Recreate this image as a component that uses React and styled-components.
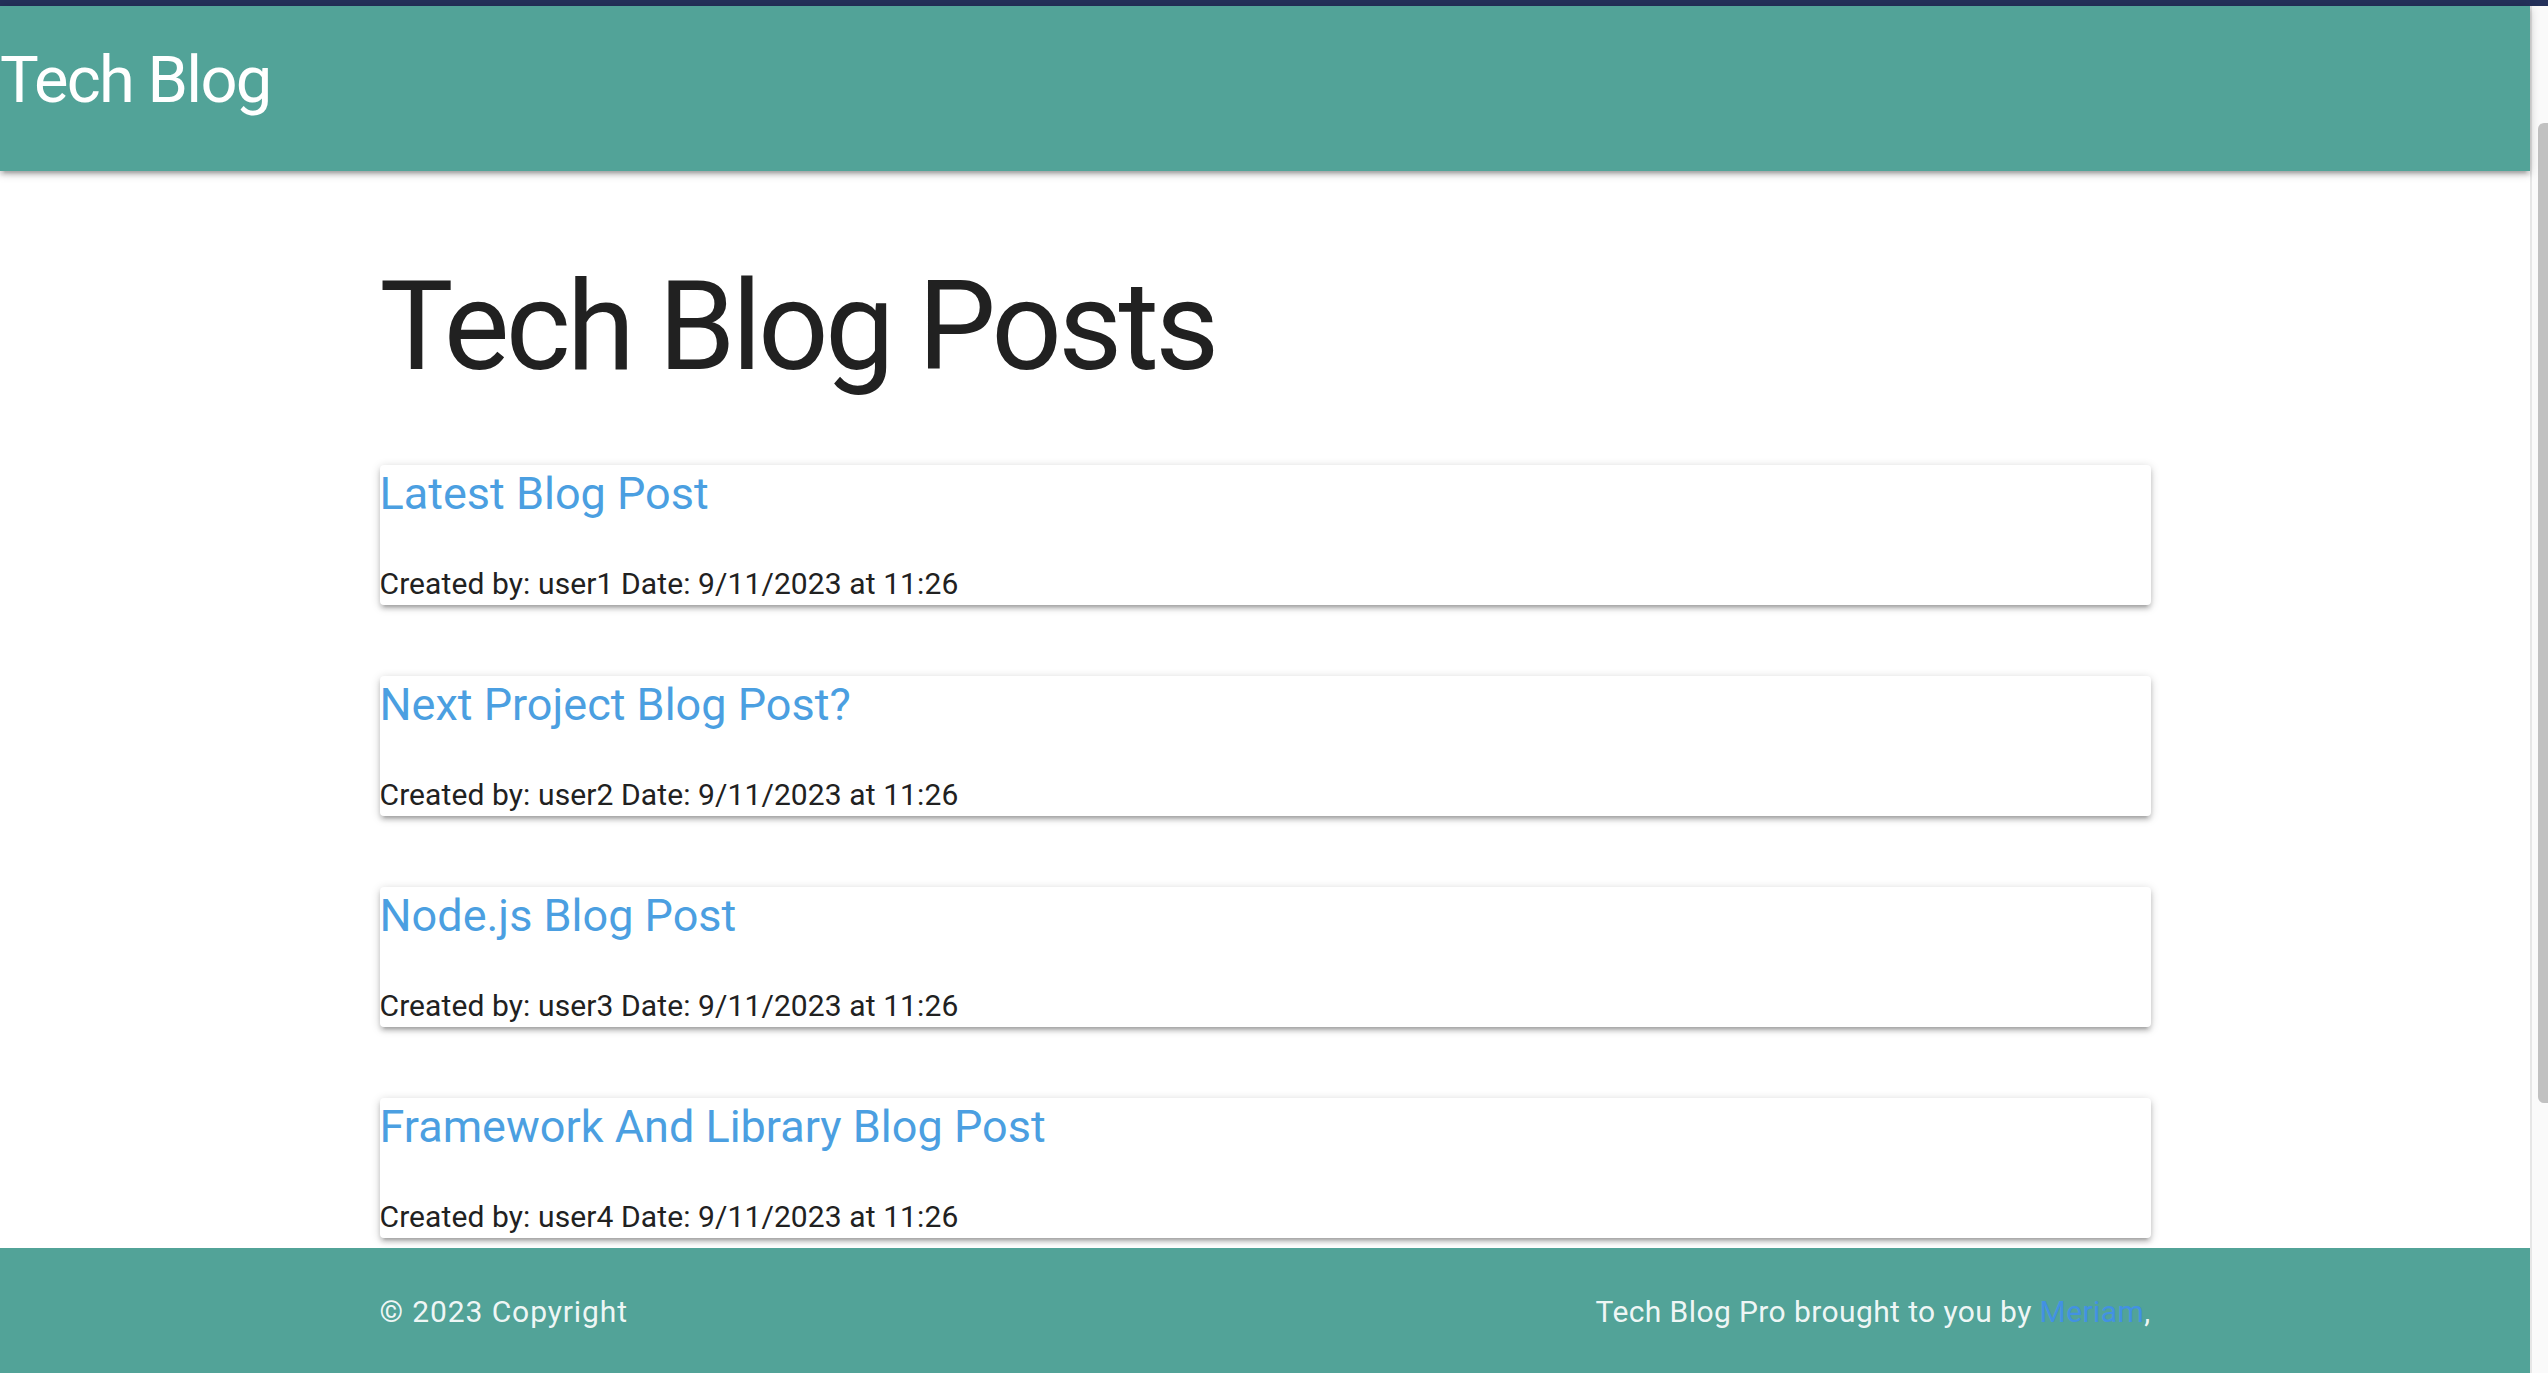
import React from 'react';
import styled, { createGlobalStyle } from 'styled-components';

const GlobalStyle = createGlobalStyle`
  html, body {
    margin: 0;
    padding: 0;
    height: 100%;
    overflow: hidden;
  }
  body {
    font-family: Roboto, "Liberation Sans", Arial, sans-serif;
    background: #ffffff;
    color: #212121;
  }
  #root {
    height: 100%;
  }
  * {
    box-sizing: border-box;
  }
`;

const TEAL = '#52a398';

const Frame = styled.div`
  height: 100vh;
  display: flex;
  flex-direction: column;
`;

const TopStrip = styled.div`
  flex: none;
  height: 6px;
  background: #24315a;
`;

const Viewport = styled.div`
  flex: 1;
  min-height: 0;
  display: flex;
`;

const Page = styled.div`
  flex: 1;
  min-width: 0;
  display: flex;
  flex-direction: column;
`;

const ScrollRail = styled.div`
  flex: none;
  width: 18px;
  background: #fafafa;
  border-left: 2px solid #e6e6e6;
  display: flex;
  flex-direction: column;
  align-items: flex-end;
`;

const ScrollThumb = styled.div`
  margin-top: 117px;
  width: 10px;
  height: 980px;
  background: #c1c1c1;
  border-radius: 6px 0 0 6px;
`;

const Header = styled.header`
  position: relative;
  z-index: 2;
  flex: none;
  height: 165px;
  background: ${TEAL};
  box-shadow: 0 4px 4px rgba(0, 0, 0, 0.14), 0 6px 2px -4px rgba(0, 0, 0, 0.12),
    0 2px 10px rgba(0, 0, 0, 0.2);
  display: flex;
  align-items: flex-start;
  padding-top: 42px;
`;

const Brand = styled.a`
  color: #ffffff;
  text-decoration: none;
  font-size: 65px;
  line-height: 1;
  letter-spacing: -1.7px;
`;

const Main = styled.main`
  flex: 1;
  min-height: 0;
  width: 70%;
  margin: 0 auto;
  padding-top: 88px;
`;

const PageTitle = styled.h1`
  margin: 0 0 70px;
  font-size: 124px;
  font-weight: 400;
  line-height: 1.1;
  letter-spacing: -3.8px;
  color: #212121;
`;

const PostList = styled.div`
  display: flex;
  flex-direction: column;
  gap: 71px;
`;

const Card = styled.article`
  display: flex;
  flex-direction: column;
  align-items: flex-start;
  background: #ffffff;
  border-radius: 4px;
  padding: 2px 0 3px;
  box-shadow: 0 4px 4px rgba(0, 0, 0, 0.14), 0 6px 2px -4px rgba(0, 0, 0, 0.12),
    0 2px 10px rgba(0, 0, 0, 0.2);
`;

const PostTitle = styled.a`
  color: #4b9fe1;
  text-decoration: none;
  font-size: 45px;
  line-height: 54px;
  letter-spacing: 0;
`;

const Meta = styled.p`
  margin: 45px 0 0;
  font-size: 30px;
  line-height: 36px;
  letter-spacing: 0.1px;
  color: #212121;
`;

const Footer = styled.footer`
  flex: none;
  height: 125px;
  background: ${TEAL};
`;

const FooterInner = styled.div`
  width: 70%;
  margin: 0 auto;
  padding-top: 47px;
  display: flex;
  justify-content: space-between;
  align-items: flex-start;
  font-size: 30px;
  line-height: 34px;
  letter-spacing: 0.4px;
  color: rgba(255, 255, 255, 0.92);
`;

const Copyright = styled.span`
  letter-spacing: 0.9px;
`;

const AuthorLink = styled.a`
  color: #4291e3;
  text-decoration: none;
`;

const posts = [
  { id: 1, title: 'Latest Blog Post', user: 'user1' },
  { id: 2, title: 'Next Project Blog Post?', user: 'user2' },
  { id: 3, title: 'Node.js Blog Post', user: 'user3' },
  { id: 4, title: 'Framework And Library Blog Post', user: 'user4' },
];

export default function App() {
  return (
    <Frame>
      <GlobalStyle />
      <TopStrip />
      <Viewport>
        <Page>
          <Header>
            <Brand href="#">Tech Blog</Brand>
          </Header>
          <Main>
            <PageTitle>Tech Blog Posts</PageTitle>
            <PostList>
              {posts.map((p) => (
                <Card key={p.id}>
                  <PostTitle href="#">{p.title}</PostTitle>
                  <Meta>
                    Created by: {p.user} Date: 9/11/2023 at 11:26
                  </Meta>
                </Card>
              ))}
            </PostList>
          </Main>
          <Footer>
            <FooterInner>
              <Copyright>© 2023 Copyright</Copyright>
              <span>
                Tech Blog Pro brought to you by <AuthorLink href="#">Meriam</AuthorLink>,
              </span>
            </FooterInner>
          </Footer>
        </Page>
        <ScrollRail>
          <ScrollThumb />
        </ScrollRail>
      </Viewport>
    </Frame>
  );
}
